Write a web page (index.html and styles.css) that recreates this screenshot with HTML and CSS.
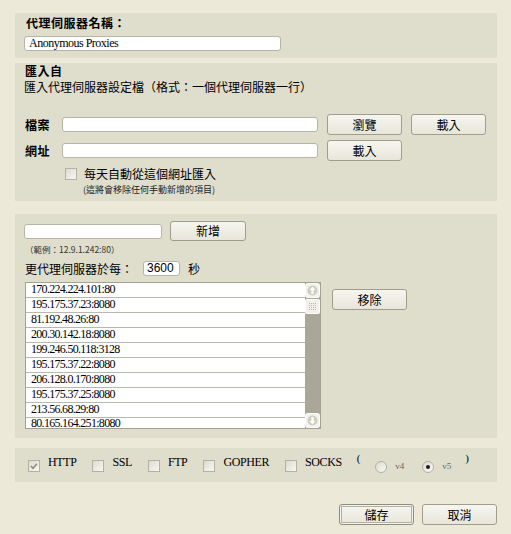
FILE: index.html
```html
<!DOCTYPE html>
<html lang="zh-Hant">
<head>
<meta charset="utf-8">
<title>代理伺服器</title>
<link rel="stylesheet" href="styles.css">
</head>
<body>
<div class="page">
  <section class="panel p1">
    <div class="title">代理伺服器名稱：</div>
    <div class="input name">Anonymous Proxies</div>
  </section>

  <section class="panel p2">
    <div class="head">匯入自</div>
    <div class="desc">匯入代理伺服器設定檔（格式：一個代理伺服器一行）</div>
    <div class="row r-file">
      <span class="rlabel">檔案</span>
      <span class="input wide"></span>
      <span class="btn">瀏覽</span>
      <span class="btn">載入</span>
    </div>
    <div class="row r-url">
      <span class="rlabel">網址</span>
      <span class="input wide"></span>
      <span class="btn">載入</span>
    </div>
    <div class="auto">
      <span class="cb"></span>
      <span class="auto-text">每天自動從這個網址匯入</span>
    </div>
    <div class="note">(這將會移除任何手動新增的項目)</div>
  </section>

  <section class="panel p3">
    <div class="row add-row">
      <span class="input addin"></span>
      <span class="btn">新增</span>
    </div>
    <div class="example">（範例：12.9.1.242:80）</div>
    <div class="refresh">
      <span>更代理伺服器於每：</span>
      <span class="input secs">3600</span>
      <span class="unit">秒</span>
    </div>
    <div class="listwrap">
      <div class="list">
        <div class="items">
          <div class="item">170.224.224.101:80</div>
          <div class="item">195.175.37.23:8080</div>
          <div class="item">81.192.48.26:80</div>
          <div class="item">200.30.142.18:8080</div>
          <div class="item">199.246.50.118:3128</div>
          <div class="item">195.175.37.22:8080</div>
          <div class="item">206.128.0.170:8080</div>
          <div class="item">195.175.37.25:8080</div>
          <div class="item">213.56.68.29:80</div>
          <div class="item">80.165.164.251:8080</div>
        </div>
        <div class="scroll">
          <span class="sbtn"><svg width="15" height="15" viewBox="0 0 15 15"><rect x="0.5" y="0.5" width="14" height="14" rx="2" fill="#F3F2EC" stroke="#fff"/><circle cx="7.5" cy="7.5" r="5" fill="#CFCDBF"/><path d="M7.5 3.5 L4.5 7 H6.3 V11 H8.7 V7 H10.5 Z" fill="#fff"/></svg></span>
          <span class="thumb"><svg width="15" height="15" viewBox="0 0 15 15"><rect x="0.5" y="0.5" width="14" height="14" rx="1" fill="#F1F0EA" stroke="#fff"/><g fill="#B8B6A8"><rect x="4" y="4" width="1" height="1"/><rect x="6" y="4" width="1" height="1"/><rect x="8" y="4" width="1" height="1"/><rect x="10" y="4" width="1" height="1"/><rect x="4" y="6" width="1" height="1"/><rect x="6" y="6" width="1" height="1"/><rect x="8" y="6" width="1" height="1"/><rect x="10" y="6" width="1" height="1"/><rect x="4" y="8" width="1" height="1"/><rect x="6" y="8" width="1" height="1"/><rect x="8" y="8" width="1" height="1"/><rect x="10" y="8" width="1" height="1"/><rect x="4" y="10" width="1" height="1"/><rect x="6" y="10" width="1" height="1"/><rect x="8" y="10" width="1" height="1"/><rect x="10" y="10" width="1" height="1"/></g></svg></span>
          <span class="track"></span>
          <span class="sbtn"><svg width="15" height="15" viewBox="0 0 15 15"><rect x="0.5" y="0.5" width="14" height="14" rx="2" fill="#F3F2EC" stroke="#fff"/><circle cx="7.5" cy="7.5" r="5" fill="#CFCDBF"/><path d="M7.5 11.5 L4.5 8 H6.3 V4 H8.7 V8 H10.5 Z" fill="#fff"/></svg></span>
        </div>
      </div>
      <span class="btn remove">移除</span>
    </div>
  </section>

  <section class="panel p4">
    <label class="opt"><span class="cb checked"><svg width="10" height="10" viewBox="0 0 10 10"><path d="M2 5 L4 7.3 L8 2.8" fill="none" stroke="#8E8C7E" stroke-width="1.6"/></svg></span><span class="proto">HTTP</span></label>
    <label class="opt"><span class="cb"></span><span class="proto">SSL</span></label>
    <label class="opt"><span class="cb"></span><span class="proto">FTP</span></label>
    <label class="opt"><span class="cb"></span><span class="proto">GOPHER</span></label>
    <label class="opt last"><span class="cb"></span><span class="proto">SOCKS</span></label>
    <span class="paren">(</span>
    <label class="ropt"><span class="radio"></span><span class="ver">v4</span></label>
    <label class="ropt"><span class="radio on"></span><span class="ver">v5</span></label>
    <span class="paren close">)</span>
  </section>

  <div class="footer">
    <span class="btn default">儲存</span>
    <span class="btn">取消</span>
  </div>
</div>
</body>
</html>
```
FILE: styles.css
```css
* { box-sizing: border-box; }
body {
  margin: 0;
  background: #ECE9D8;
  font-family: "Noto Sans CJK TC", "Liberation Sans", sans-serif;
  font-size: 12px;
  color: #000;
  width: 511px;
  height: 534px;
  overflow: hidden;
}
.page {
  padding: 13px 14px 0 15px;
  display: flex;
  flex-direction: column;
}
.panel {
  background: #DFDDCC;
  width: 482px;
}
.input {
  display: block;
  background: #fff;
  border: 1px solid #B7B5A6;
  border-radius: 3px;
  height: 15px;
}
.btn {
  display: block;
  width: 75px;
  height: 21px;
  border: 1px solid #A09E8B;
  border-radius: 3px;
  background: linear-gradient(#F6F5F0, #E8E6DA);
  text-align: center;
  line-height: 19px;
  font-size: 12px;
}

/* panel 1 */
.p1 { padding: 1px 9px 7px 9px; height: 45px; }
.title {
  font-weight: bold;
  line-height: 18px;
  height: 18px;
  margin-left: 2px;
  letter-spacing: 0.5px;
}
.name {
  width: 257px;
  margin-top: 4px;
  font-family: "Liberation Serif", serif;
  font-size: 12px;
  letter-spacing: -0.5px;
  line-height: 13px;
  padding-left: 4px;
}

/* panel 2 */
.p2 { margin-top: 5px; padding: 0 10px 5px 10px; }
.head { font-weight: bold; line-height: 16px; height: 16px; letter-spacing: 0.5px; }
.desc { line-height: 16px; height: 16px; margin-left: -1px; }
.row { display: flex; align-items: center; height: 21px; }
.r-file { margin-top: 19px; }
.r-url { margin-top: 5px; }
.rlabel { width: 37px; font-weight: bold; letter-spacing: 0.5px; }
.wide { width: 256px; height: 15px; }
.row .btn + .btn { margin-left: 9px; }
.wide + .btn { margin-left: 9px; }
.auto { display: flex; align-items: center; height: 14px; margin-top: 6px; padding-left: 40px; }
.auto-text { margin-left: 7px; line-height: 14px; }
.note {
  margin-top: 3px;
  margin-left: 58px;
  font-size: 9px;
  line-height: 12px;
  height: 12px;
  color: #222;
}
.cb {
  display: inline-flex;
  align-items: center;
  justify-content: center;
  width: 12px;
  height: 12px;
  border: 1px solid #B3B1A2;
  background: linear-gradient(135deg, #DCDAD0, #F8F8F4);
  flex: none;
}

/* panel 3 */
.p3 { margin-top: 13px; padding: 7px 10px 9px 9px; }
.add-row { height: 20px; }
.addin { width: 138px; }
.addin + .btn { margin-left: 8px; width: 76px; height: 20px; line-height: 18px; }
.example {
  margin-top: 2px;
  margin-left: 1px;
  font-size: 8.5px;
  line-height: 12px;
  height: 12px;
  color: #333;
}
.refresh {
  display: flex;
  align-items: center;
  height: 17px;
  margin-top: 5px;
  margin-left: 1px;
}
.secs {
  width: 37px;
  margin-left: 10px;
  font-family: "Liberation Sans", sans-serif;
  font-size: 12px;
  line-height: 13px;
  padding-left: 3px;
}
.unit { margin-left: 8px; }
.listwrap { display: flex; align-items: flex-start; margin-top: 5px; margin-left: 1px; }
.list {
  width: 296px;
  height: 147px;
  border: 1px solid #A3A192;
  background: #fff;
  display: flex;
}
.items { flex: 1; }
.item {
  height: 15px;
  border-bottom: 1px solid #B9B8AC;
  padding-left: 5px;
  font-family: "Liberation Serif", serif;
  font-size: 12px;
  letter-spacing: -0.7px;
  line-height: 12px;
}
.item:last-child {
  height: 10px;
  line-height: 10px;
  border-bottom: 0;
}
.scroll {
  width: 15px;
  display: flex;
  flex-direction: column;
  background: #AAA798;
}
.sbtn, .thumb { display: block; height: 15px; flex: none; }
.sbtn svg, .thumb svg { display: block; }
.thumb { margin-top: 1px; }
.track { flex: 1; }
.remove { margin-left: 11px; margin-top: 7px; }

/* panel 4 */
.p4 {
  margin-top: 10px;
  height: 34px;
  padding-left: 13px;
  display: flex;
  align-items: flex-start;
}
.opt { display: flex; align-items: flex-start; margin-right: 16px; }
.opt.last { margin-right: 15px; }
.opt .cb { margin-top: 12px; }
.proto {
  margin-left: 8px;
  margin-top: 8px;
  font-family: "Liberation Serif", serif;
  font-size: 12px;
  letter-spacing: -0.4px;
  line-height: 12px;
}
.paren {
  font-family: "Liberation Serif", serif;
  font-size: 11px;
  line-height: 12px;
  margin-top: 4px;
  margin-right: 15px;
}
.paren.close { margin-right: 0; margin-left: 14px; }
.ropt { display: flex; align-items: flex-start; }
.ropt + .ropt { margin-left: 18px; }
.radio {
  display: flex;
  align-items: center;
  justify-content: center;
  width: 12px;
  height: 12px;
  border-radius: 50%;
  border: 1px solid #B3B1A2;
  background: linear-gradient(135deg, #DCDAD0, #FAFAF7);
  margin-top: 13px;
}
.radio.on::after {
  content: "";
  width: 4px;
  height: 4px;
  border-radius: 50%;
  background: #1a1a1a;
}
.ver {
  margin-left: 8px;
  margin-top: 14px;
  font-family: "Liberation Serif", serif;
  font-size: 9px;
  line-height: 9px;
  color: #666;
}

/* footer */
.footer {
  margin-top: 22px;
  width: 482px;
  display: flex;
  justify-content: flex-end;
  gap: 8px;
}
.btn.default {
  border-color: #8E8C7B;
  box-shadow: inset 0 0 0 1px #F4F3EE, inset 0 0 0 2px #B2B0A0;
}
```
